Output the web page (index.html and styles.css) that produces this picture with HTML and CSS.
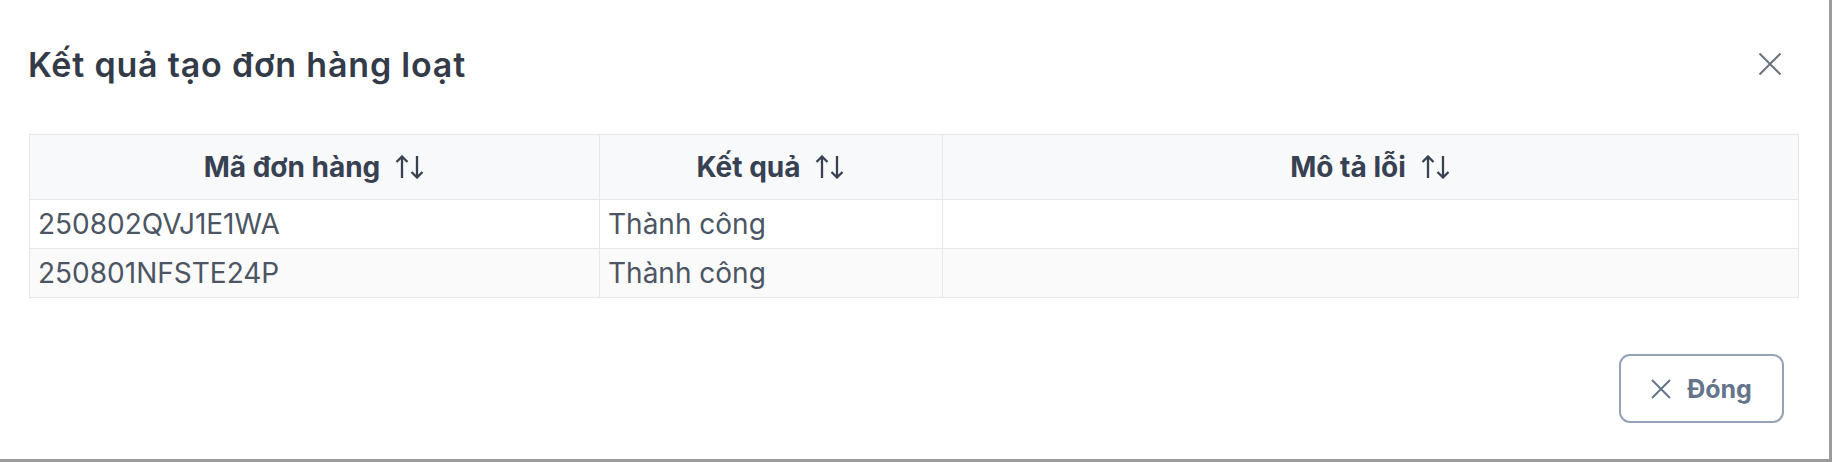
FILE: index.html
```html
<!DOCTYPE html>
<html lang="vi">
  <head>
    <meta charset="UTF-8" />
    <meta name="viewport" content="width=device-width, initial-scale=1.0" />
    <title>Kết quả tạo đơn hàng loạt</title>
    <link rel="stylesheet" href="styles.css">
  </head>
  <body>
    <div class="dialog">
      <div class="dialog-header">
        <h2 class="dialog-title">Kết quả tạo đơn hàng loạt</h2>
        <button class="dialog-close" type="button" aria-label="Close">
          <svg width="24" height="24" viewBox="0 0 24 24">
            <path d="M1.5 1.5 L22.5 22.5 M22.5 1.5 L1.5 22.5" />
          </svg>
        </button>
      </div>

      <div class="dialog-content">
        <table class="result-table">
          <thead>
            <tr>
              <th class="col-code">
                <span class="th-inner">Mã đơn hàng
                  <svg class="sort-icon" width="31" height="24" viewBox="0 0 31 24">
                    <path d="M8 23 V1.5 M2.5 7 L8 1.5 L13.5 7 M23 1 V22.5 M17.5 17 L23 22.5 L28.5 17" />
                  </svg>
                </span>
              </th>
              <th class="col-result">
                <span class="th-inner">Kết quả
                  <svg class="sort-icon" width="31" height="24" viewBox="0 0 31 24">
                    <path d="M8 23 V1.5 M2.5 7 L8 1.5 L13.5 7 M23 1 V22.5 M17.5 17 L23 22.5 L28.5 17" />
                  </svg>
                </span>
              </th>
              <th>
                <span class="th-inner">Mô tả lỗi
                  <svg class="sort-icon" width="31" height="24" viewBox="0 0 31 24">
                    <path d="M8 23 V1.5 M2.5 7 L8 1.5 L13.5 7 M23 1 V22.5 M17.5 17 L23 22.5 L28.5 17" />
                  </svg>
                </span>
              </th>
            </tr>
          </thead>
          <tbody>
            <tr>
              <td>250802QVJ1E1WA</td>
              <td>Thành công</td>
              <td></td>
            </tr>
            <tr class="row-odd">
              <td>250801NFSTE24P</td>
              <td>Thành công</td>
              <td></td>
            </tr>
          </tbody>
        </table>
      </div>

      <div class="dialog-footer">
        <button class="btn-outline" type="button">
          <svg width="20" height="20" viewBox="0 0 20 20">
            <path d="M1 1 L19 19 M19 1 L1 19" />
          </svg>
          <span>Đóng</span>
        </button>
      </div>
    </div>
  </body>
</html>
```

FILE: styles.css
```css
body {
  margin: 0;
  font-family: Inter, "Noto Sans", sans-serif;
  background-color: #ffffff;
}

.dialog {
  width: 1832px;
  height: 462px;
  box-sizing: border-box;
  border-right: 3px solid #9b9b9b;
  border-bottom: 3px solid #9b9b9b;
  display: flex;
  flex-direction: column;
}

.dialog-header {
  height: 128px;
  padding: 0 47px 0 28px;
  display: flex;
  align-items: center;
  justify-content: space-between;
}

.dialog-title {
  margin: 0;
  font-size: 34px;
  font-weight: 600;
  letter-spacing: 0.8px;
  color: #343b48;
}

.dialog-close {
  width: 24px;
  height: 24px;
  padding: 0;
  border: none;
  background: none;
  cursor: pointer;
}

.dialog-close svg path {
  fill: none;
  stroke: #6b7280;
  stroke-width: 2;
}

.dialog-content {
  padding: 6px 30px 0 29px;
}

.result-table {
  width: 100%;
  border-collapse: collapse;
  border: 1px solid #e5e7eb;
}

.result-table th,
.result-table td {
  border: 1px solid #e5e7eb;
  padding: 0 8px;
}

.result-table th {
  height: 64px;
  background-color: #f8f9fb;
  font-size: 28px;
  font-weight: 700;
  color: #374151;
}

.col-code {
  width: 553px;
}

.col-result {
  width: 326px;
}

.th-inner {
  display: inline-flex;
  align-items: center;
  gap: 14px;
}

.sort-icon path {
  fill: none;
  stroke: #374151;
  stroke-width: 2.3;
}

.result-table td {
  height: 48px;
  font-size: 28px;
  color: #4b5563;
}

.row-odd td {
  background-color: #fafafa;
}

.dialog-footer {
  padding: 56px 45px 0 0;
  display: flex;
  justify-content: flex-end;
}

.btn-outline {
  width: 165px;
  height: 69px;
  box-sizing: border-box;
  border: 2px solid #94a3b8;
  border-radius: 11px;
  background: #ffffff;
  display: flex;
  align-items: center;
  justify-content: center;
  gap: 16px;
  font-family: Inter, "Noto Sans", sans-serif;
  font-size: 25px;
  font-weight: 700;
  color: #64748b;
  cursor: pointer;
}

.btn-outline svg path {
  fill: none;
  stroke: #64748b;
  stroke-width: 2;
}
```
